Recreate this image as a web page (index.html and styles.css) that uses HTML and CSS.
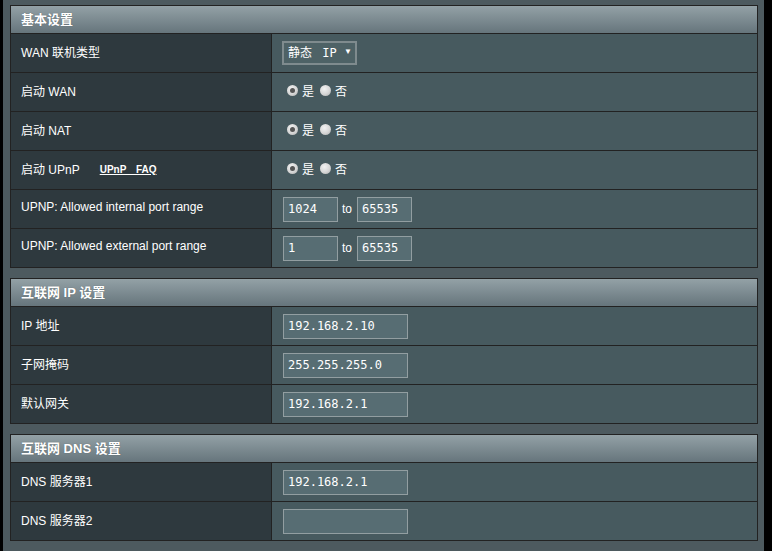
FILE: index.html
```html
<!DOCTYPE html>
<html lang="zh">
<head>
<meta charset="utf-8">
<title>WAN 设置</title>
<link rel="stylesheet" href="styles.css">
</head>
<body>
<div class="page">
  <section class="form-section">
    <div class="section-head">基本设置</div>
    <div class="row">
      <div class="label">WAN 联机类型</div>
      <div class="value">
        <div class="select-wrap">
          <select class="select"><option>静态 IP</option></select>
          <span class="arrow">▼</span>
        </div>
      </div>
    </div>
    <div class="row">
      <div class="label">启动 WAN</div>
      <div class="value">
        <label class="radio"><input type="radio" name="wan" checked>是</label>
        <label class="radio"><input type="radio" name="wan">否</label>
      </div>
    </div>
    <div class="row">
      <div class="label">启动 NAT</div>
      <div class="value">
        <label class="radio"><input type="radio" name="nat" checked>是</label>
        <label class="radio"><input type="radio" name="nat">否</label>
      </div>
    </div>
    <div class="row">
      <div class="label">启动 UPnP <a class="faq" href="#">UPnP FAQ</a></div>
      <div class="value">
        <label class="radio"><input type="radio" name="upnp" checked>是</label>
        <label class="radio"><input type="radio" name="upnp">否</label>
      </div>
    </div>
    <div class="row">
      <div class="label">UPNP: Allowed internal port range</div>
      <div class="value">
        <input class="field port" type="text" value="1024">
        <span class="to">to</span>
        <input class="field port" type="text" value="65535">
      </div>
    </div>
    <div class="row">
      <div class="label">UPNP: Allowed external port range</div>
      <div class="value">
        <input class="field port" type="text" value="1">
        <span class="to">to</span>
        <input class="field port" type="text" value="65535">
      </div>
    </div>
  </section>

  <section class="form-section">
    <div class="section-head">互联网 IP 设置</div>
    <div class="row">
      <div class="label">IP 地址</div>
      <div class="value"><input class="field ip" type="text" value="192.168.2.10"></div>
    </div>
    <div class="row">
      <div class="label">子网掩码</div>
      <div class="value"><input class="field ip" type="text" value="255.255.255.0"></div>
    </div>
    <div class="row">
      <div class="label">默认网关</div>
      <div class="value"><input class="field ip" type="text" value="192.168.2.1"></div>
    </div>
  </section>

  <section class="form-section">
    <div class="section-head">互联网 DNS 设置</div>
    <div class="row">
      <div class="label">DNS 服务器1</div>
      <div class="value"><input class="field ip" type="text" value="192.168.2.1"></div>
    </div>
    <div class="row">
      <div class="label">DNS 服务器2</div>
      <div class="value"><input class="field ip" type="text" value=""></div>
    </div>
  </section>
</div>
</body>
</html>
```
FILE: styles.css
```css
html, body {
  margin: 0;
  padding: 0;
  background: #000;
  height: 100%;
}
body {
  font-family: "Liberation Sans", Arial, "Noto Sans CJK SC", sans-serif;
  font-size: 12px;
  color: #fff;
}
.page {
  margin-left: 3px;
  width: 761px;
  min-height: 551px;
  box-sizing: border-box;
  background: #4d5a5f;
  padding: 5px 0 0 7px;
}
.form-section {
  width: 748px;
  box-sizing: border-box;
  border: 1px solid #222;
  margin-bottom: 10px;
}
.section-head {
  height: 27px;
  line-height: 27px;
  padding-left: 10px;
  font-size: 13px;
  font-weight: bold;
  background: linear-gradient(to bottom, #93a1a6 0%, #66757c 100%);
  border-bottom: 1px solid #222;
  text-shadow: 0 0 1px rgba(0,0,0,0.35);
}
.row {
  display: flex;
  height: 38px;
}
.row + .row {
  border-top: 1px solid #222;
}
.label {
  width: 261px;
  box-sizing: border-box;
  padding: 0 0 4px 10px;
  background: #2e393e;
  border-right: 1px solid #222;
  display: flex;
  align-items: center;
}
.value {
  flex: 1;
  background: #475a5f;
  padding-left: 10px;
  display: flex;
  align-items: center;
}
.faq {
  color: #fff;
  font-size: 10px;
  font-weight: bold;
  text-decoration: underline;
  margin-left: 20px;
  word-spacing: 7px;
  margin-top: 2px;
}
.select-wrap {
  position: relative;
  margin-top: -1px;
}
.select {
  appearance: none;
  -webkit-appearance: none;
  width: 75px;
  height: 24px;
  box-sizing: border-box;
  background: #4e6266;
  border: 2px solid #7f8b8e;
  border-radius: 0;
  color: #fff;
  font-family: "DejaVu Sans Mono", "Noto Sans CJK SC", monospace;
  font-size: 12px;
  padding: 0 0 0 4px;
  word-spacing: 3px;
}
.arrow {
  position: absolute;
  left: 62px;
  top: 6px;
  font-size: 8px;
  color: #fff;
  pointer-events: none;
}
.radio {
  display: flex;
  align-items: center;
  margin-right: 6px;
  padding-bottom: 3px;
  font-family: "Noto Sans CJK SC", sans-serif;
  font-size: 12px;
}
.radio:first-child {
  margin-left: 5px;
}
.radio input {
  appearance: none;
  -webkit-appearance: none;
  width: 11px;
  height: 11px;
  margin: -1px 4px 0 0;
  border-radius: 50%;
  background: radial-gradient(circle at 40% 35%, #f2f2f2 0%, #d6d6d6 55%, #a9a9a9 100%);
  position: relative;
}
.radio input:checked::after {
  content: "";
  position: absolute;
  left: 3px;
  top: 3px;
  width: 5px;
  height: 5px;
  border-radius: 50%;
  background: #555;
}
.field {
  height: 25px;
  box-sizing: border-box;
  background: #576d73;
  border: 1px solid #929ea1;
  color: #fff;
  font-family: "DejaVu Sans Mono", monospace;
  font-size: 12px;
  padding: 0 0 0 4px;
  margin: 0 0 0 1px;
  outline: none;
}
.port {
  width: 55px;
}
.ip {
  width: 125px;
}
.to {
  margin: 0 4px 0 4px;
  font-size: 12px;
}
```
